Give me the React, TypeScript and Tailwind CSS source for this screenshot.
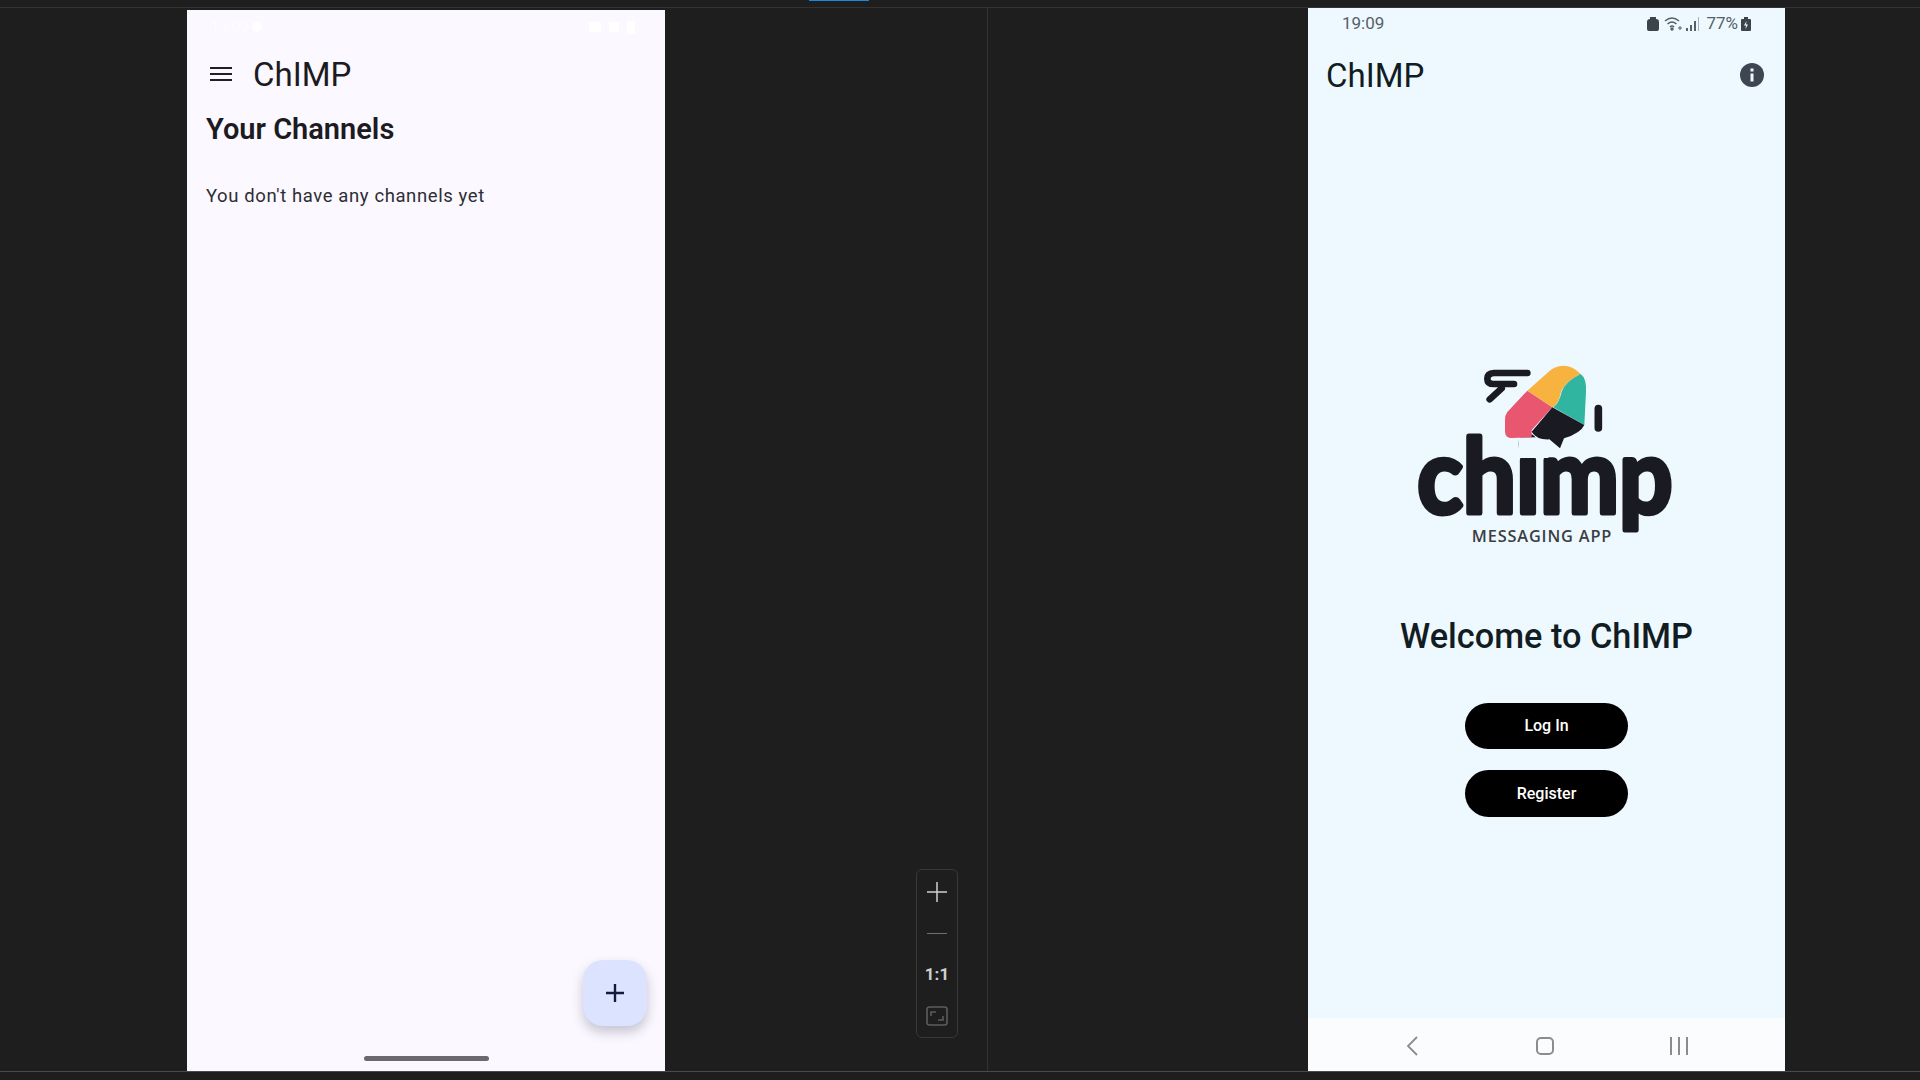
import React from 'react';

const roboto = { fontFamily: 'Roboto, sans-serif' };

// --- Logo ---

const ChimpLogo: React.FC = () => (
    <svg width="313" height="200" viewBox="0 0 939 600" fill="none">
        <text x="465" y="489" textAnchor="middle" textLength="766" lengthAdjust="spacingAndGlyphs" fill="#1a1b22" stroke="#1a1b22" strokeWidth="15" strokeLinejoin="round" fontFamily="Lato, sans-serif" fontWeight="700" fontSize="310">chimp</text>
        {/* logo's i has no dot, the mark sits there instead */}
        <rect x="385" y="262" width="90" height="62" fill="#eef9ff" />
        <path d="M412 122 L352 186 Q345 195 345 210 L345 245 Q346 264 365 264 L425 262 L425 240 L487 172 Z" fill="#e9566f" />
        <path d="M412 122 L482 60 Q530 30 572 72 Q525 95 513 125 Q505 165 487 172 Z" fill="#f7b23f" />
        <path d="M572 72 Q590 85 588 125 L583 225 L490 172 Q507 160 515 125 Q525 95 572 72 Z" fill="#2fb5a0" />
        <path d="M487 172 L583 225 Q572 250 522 265 L510 295 L478 268 Q440 270 425 245 Z" fill="#1a1b22" />
        <path d="M412 69 L312 69 Q292 70 292 86 Q292 102 312 102 L372 102 M335 115 L299 148" stroke="#1a1b22" strokeWidth="20" strokeLinecap="round" />
        <path d="M625 176 L625 234" stroke="#1a1b22" strokeWidth="23" strokeLinecap="round" />
        <text x="456" y="577" textAnchor="middle" fill="#3a3e44" fontFamily="'Open Sans', sans-serif" fontWeight="600" fontSize="49" letterSpacing="2.5">MESSAGING APP</text>
    </svg>
);

// --- Left phone ---

const ChannelsPhone: React.FC = () => (
    <div className="w-[478px] mt-[2px] h-[1061px] flex flex-col bg-[#fbf8ff] text-[#1b1b21]" style={roboto}>
        <div className="h-[34px] flex items-center justify-between pl-[24px] pr-[30px] text-white/70">
            <div className="flex items-center gap-1 text-[15px]">
                <span>19:09</span>
                <span className="w-[10px] h-[10px] rounded-full bg-white" />
            </div>
            <div className="flex items-center gap-2">
                <span className="w-[12px] h-[10px] bg-white" />
                <span className="w-[10px] h-[10px] bg-white" />
                <span className="w-[8px] h-[13px] bg-white" />
            </div>
        </div>
        <div className="h-[60px] flex items-center pl-[23px]">
            <svg width="22" height="18" viewBox="0 0 22 18" fill="none" stroke="#1f1f25" strokeWidth="2.2">
                <path d="M0 3 H22 M0 9 H22 M0 15 H22" />
            </svg>
            <span className="ml-[21px] text-[33px] leading-none">ChIMP</span>
        </div>
        <div className="mt-[5px] pl-[19px] text-[29px] leading-[40px] font-semibold">Your Channels</div>
        <div className="mt-[34px] pl-[19px] text-[18.5px] leading-[26px] tracking-[0.6px] text-[#2e2d34]">You don't have any channels yet</div>
        <div className="mt-auto self-end mr-[18px] w-[64px] h-[66px] rounded-[20px] bg-[#dce3ff] shadow-[0_6px_12px_rgba(40,40,70,0.25)] flex items-center justify-center">
            <svg width="18" height="18" viewBox="0 0 18 18" stroke="#14193d" strokeWidth="2.4">
                <path d="M0 9 H18 M9 0 V18" />
            </svg>
        </div>
        <div className="mt-[30px] mb-[10px] self-center w-[125px] h-[5px] rounded-full bg-[#6b6870]" />
    </div>
);

// --- Zoom controls ---

const ZoomControls: React.FC = () => (
    <div className="w-[42px] h-[169px] mb-[33px] pt-[1px] rounded-[6px] border border-[#383838] grid grid-rows-4 items-center justify-items-center text-[#d0d0d0]">
        <svg width="20" height="20" viewBox="0 0 20 20" stroke="#cfcfcf" strokeWidth="1.5">
            <path d="M0 10 H20 M10 0 V20" />
        </svg>
        <div className="w-[20px] h-[1px] bg-[#6e6e6e]" />
        <span className="text-[17px] leading-none font-bold" style={roboto}>1:1</span>
        <svg width="22" height="20" viewBox="0 0 22 20" fill="none" stroke="#5c5c5c" strokeWidth="1.6">
            <rect x="1" y="1" width="20" height="18" rx="2.5" />
            <path d="M5 10 V6 H10 M17 10 V14 H12" />
        </svg>
    </div>
);

// --- Right phone ---

const WelcomePhone: React.FC = () => (
    <div className="w-[477px] h-[1063px] flex flex-col bg-[#eef9ff] text-[#111d23]" style={roboto}>
        <div className="h-[30px] flex items-center pl-[34px] pr-[34px] pt-[1px] text-[#566067]">
            <span className="text-[17px]">19:09</span>
            <div className="ml-auto flex items-center">
                <svg width="12" height="15" viewBox="0 0 12 15" fill="#3b444b">
                    <path d="M3 1 H9 L9 3 Q12 3 12 6 V13 Q12 15 10 15 H2 Q0 15 0 13 V6 Q0 3 3 3 Z" />
                </svg>
                <svg className="ml-[5px]" width="18" height="15" viewBox="0 0 18 15" fill="none" stroke="#566067" strokeWidth="1.5">
                    <path d="M1 5 Q8 -1 15 5 M3.5 8 Q8 4 12.5 8 M6 11 Q8 9 10 11" />
                    <circle cx="8" cy="13" r="1" fill="#566067" />
                    <path d="M14 12 H18 M16 10 V14" strokeWidth="1" />
                </svg>
                <svg className="ml-[4px]" width="13" height="14" viewBox="0 0 13 14" fill="#566067">
                    <rect x="0" y="11" width="2" height="3" />
                    <rect x="4" y="8" width="2" height="6" />
                    <rect x="8" y="4" width="2" height="10" />
                    <rect x="12" y="0" width="1" height="14" fill="#a9b1b6" />
                </svg>
                <span className="ml-[7px] text-[17px] leading-none">77%</span>
                <svg className="ml-[3px]" width="10" height="14" viewBox="0 0 10 14" fill="#3b444b">
                    <path d="M3 0 H7 V2 H9 Q10 2 10 3 V13 Q10 14 9 14 H1 Q0 14 0 13 V3 Q0 2 1 2 H3 Z" />
                    <path d="M5.5 4 L3 8.5 H5 L4.5 12 L7 7.5 H5 Z" fill="#eef9ff" />
                </svg>
            </div>
        </div>
        <div className="h-[74px] flex items-center justify-between pl-[18px] pr-[21px]">
            <span className="text-[33px] leading-none">ChIMP</span>
            <svg width="24" height="24" viewBox="0 0 24 24">
                <circle cx="12" cy="12" r="12" fill="#3d4651" />
                <rect x="10.5" y="10.5" width="3" height="8" fill="#eef9ff" />
                <rect x="10.5" y="5.5" width="3" height="3" fill="#eef9ff" />
            </svg>
        </div>
        <div className="flex-1 flex flex-col items-center pt-[238px]">
            <ChimpLogo />
            <div className="mt-[64px] text-[34.3px] leading-[44px] font-medium">Welcome to ChIMP</div>
            <button className="mt-[45px] w-[163px] h-[46px] rounded-full bg-black text-white text-[16px] font-medium">Log In</button>
            <button className="mt-[21px] w-[163px] h-[47px] rounded-full bg-black text-white text-[16px] font-medium">Register</button>
        </div>
        <div className="h-[53px] flex items-center bg-[#fbfcfd] pt-[2px]">
            <div className="w-[110px] flex justify-end">
                <svg width="12" height="20" viewBox="0 0 12 20" fill="none" stroke="#8c8c8c" strokeWidth="1.8">
                    <path d="M11 1 L2 10 L11 19" />
                </svg>
            </div>
            <div className="w-[136px] flex justify-end">
                <div className="w-[18px] h-[18px] rounded-[5px] border-2 border-[#8c8c8c]" />
            </div>
            <div className="w-[134px] flex justify-end">
                <svg width="18" height="18" viewBox="0 0 18 18" stroke="#8c8c8c" strokeWidth="2">
                    <path d="M1 0 V18 M9 0 V18 M17 0 V18" />
                </svg>
            </div>
        </div>
    </div>
);

export default function App() {
    return (
        <div className="w-[1920px] h-[1080px] overflow-hidden flex flex-col bg-[#1e1e1e]">
            <div className="h-[8px] shrink-0 border-b border-[#333333] pl-[809px]">
                <div className="w-[60px] h-[1px] bg-[#1f86d8]" />
            </div>
            <div className="h-[1063px] shrink-0 flex">
                <div className="w-[988px] pl-[187px] pr-[29px] flex justify-between items-end border-r border-[#333333]">
                    <ChannelsPhone />
                    <ZoomControls />
                </div>
                <div className="ml-[320px]">
                    <WelcomePhone />
                </div>
            </div>
            <div className="flex-1 border-t border-[#4a4a4a]" />
        </div>
    );
}
